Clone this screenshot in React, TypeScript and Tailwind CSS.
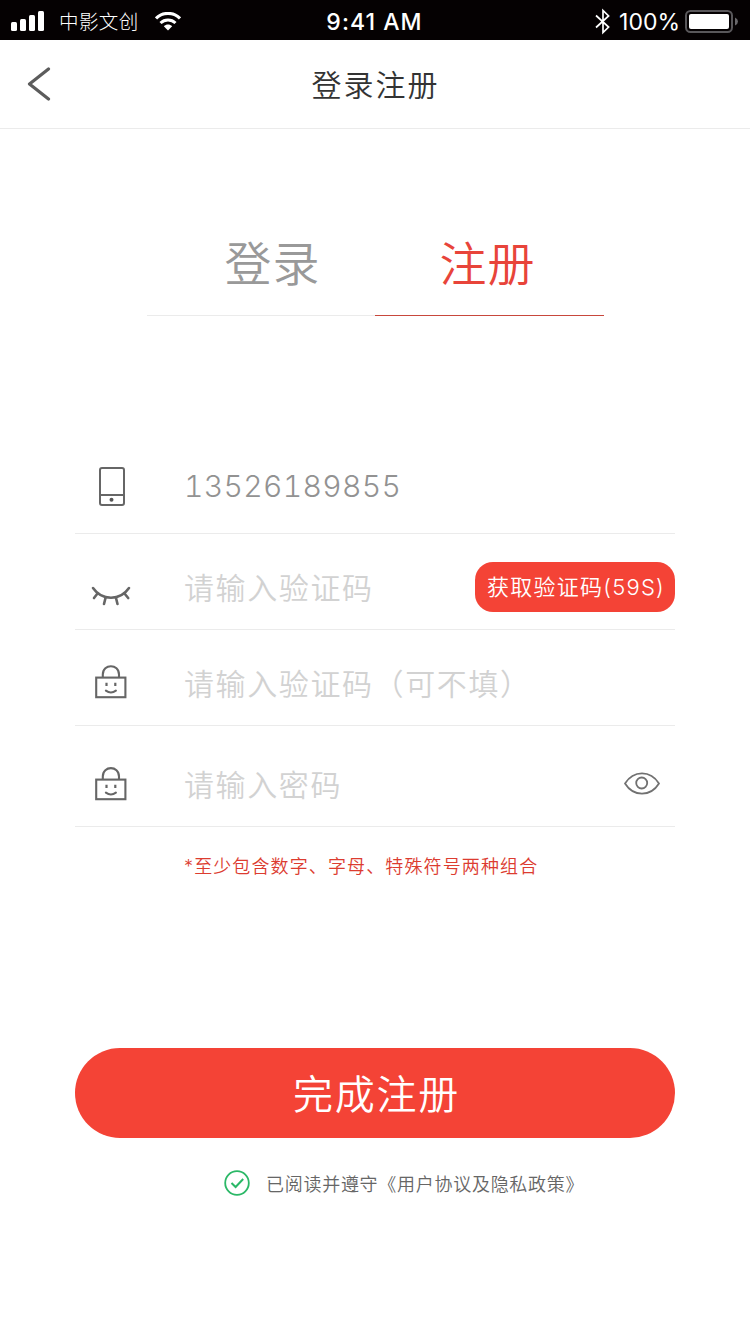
import type { ReactNode } from "react";

const SANS = "font-['Inter','Noto_Sans_CJK_SC',sans-serif]";

function StatusBar() {
  return (
    <div className="flex h-10 items-center bg-[#050102] text-white">
      <div className="flex flex-1 items-center pl-[11px]">
        <svg className="mt-[2px]" width="33" height="20" viewBox="0 0 33 20" fill="currentColor">
          <rect x="0" y="11" width="6" height="9" rx="1.5" />
          <rect x="9" y="8" width="6" height="12" rx="1.5" />
          <rect x="18" y="4" width="6" height="16" rx="1.5" />
          <rect x="27" y="0" width="6" height="20" rx="1.5" />
        </svg>
        <span className="ml-[15px] pt-[4px] text-[19.5px] leading-[40px] font-light tracking-[0.4px]">中影文创</span>
        <svg className="ml-[16px] mt-[2px]" width="26" height="19" viewBox="0 0 26 19" fill="none" stroke="currentColor">
          <path d="M1 6.4 C7.5 -.2 18.5 -.2 25 6.4" strokeWidth="3.2" />
          <path d="M5.5 11 C9.7 7 16.3 7 20.5 11" strokeWidth="3" />
          <path d="M8.8 14.3 C11.2 12 14.8 12 17.2 14.3 L13 18.5Z" fill="currentColor" stroke="none" />
        </svg>
      </div>
      <span className="pt-[3px] text-[23px] leading-[40px] font-medium tracking-[1.05px]">9:41 AM</span>
      <div className="flex flex-1 items-center justify-end pr-[12px]">
        <svg className="mt-[2px]" width="16" height="27" viewBox="0 0 16 27" fill="none" stroke="currentColor" strokeWidth="1.7">
          <path d="M2 7.5 L14.6 19 L9 24.5 V2.5 L14.6 8 L2 19.5" />
        </svg>
        <span className="ml-[9px] pt-[4px] text-[23px] leading-[37px]">100%</span>
        <svg className="ml-[5px] mt-[2px]" width="53" height="23" viewBox="0 0 53 23">
          <rect x="1" y="1" width="46" height="21" rx="4.5" fill="none" stroke="#59575a" strokeWidth="2" />
          <rect x="4" y="4" width="40" height="15" rx="2" fill="white" />
          <path d="M50 7.5 Q53 9 53 11.5 Q53 14 50 15.5Z" fill="#6a686b" />
        </svg>
      </div>
    </div>
  );
}

function PhoneIcon() {
  return (
    <svg width="26" height="39" viewBox="0 0 26 39" fill="none" stroke="#666" strokeWidth="2">
      <rect x="1" y="1" width="24" height="37" rx="2" />
      <path d="M1 28H25" />
      <circle cx="12.5" cy="32.7" r="2" fill="#555" stroke="none" />
    </svg>
  );
}

function ClosedEyeIcon() {
  return (
    <svg width="40" height="20" viewBox="0 0 40 20" fill="none" stroke="#666" strokeWidth="2.6" strokeLinecap="round">
      <path d="M2 2 C11 15 29 15 38 2" />
      <path d="M6.5 7.5 L3 12 M14.5 12 L13 18 M25 12 L26.5 18 M33.5 7.5 L37.2 12" />
    </svg>
  );
}

function LockIcon() {
  return (
    <svg width="32" height="34" viewBox="0 0 32 34" fill="none" stroke="#666" strokeWidth="2.1">
      <rect x="1.2" y="12.6" width="29.2" height="19.6" />
      <path d="M7.8 12 V9.5 C7.8 -1.6 24 -1.6 24 9.5 V12" />
      <path d="M11.5 17.8 V21 M20.3 17.8 V21" strokeWidth="2.2" />
      <path d="M10.9 25.6 Q15.9 29.4 20.9 25.6" strokeLinecap="round" />
    </svg>
  );
}

function EyeIcon() {
  return (
    <svg width="36" height="23" viewBox="0 0 36 23" fill="none" stroke="#717171" strokeWidth="1.8">
      <path d="M1 11.5 C9.5 -2 26.5 -2 35 11.5 C26.5 25 9.5 25 1 11.5Z" strokeLinejoin="round" />
      <circle cx="17.7" cy="11" r="5.5" />
    </svg>
  );
}

function Field({
  icon,
  className,
  children,
}: {
  icon: ReactNode;
  className: string;
  children: ReactNode;
}) {
  return (
    <div className={`flex items-center border-b border-[#ebebeb] ${className}`}>
      <div className="flex w-[72px] shrink-0 justify-center">{icon}</div>
      <div className="flex flex-1 items-center justify-between pl-[37px]">{children}</div>
    </div>
  );
}

function Hint({ children }: { children: ReactNode }) {
  return (
    <span className="pt-[2px] text-[30px] leading-[44px] font-[350] tracking-[1.6px] whitespace-nowrap text-[#d2d2d2]">
      {children}
    </span>
  );
}

export default function App() {
  return (
    <div className={`flex h-[1334px] w-[750px] flex-col overflow-hidden bg-white ${SANS}`}>
      <StatusBar />
      <header className="grid h-[89px] grid-cols-[1fr_auto_1fr] items-center border-b border-[#ebebeb]">
        <svg className="ml-[27px]" width="24" height="34" viewBox="0 0 24 34" fill="none" stroke="#5c5c5c" strokeWidth="3.2" strokeLinecap="round" strokeLinejoin="round">
          <path d="M21.5 2 L2.5 17 L21.5 32" />
        </svg>
        <h1 className="pt-[2px] pl-[1px] text-[30px] leading-[44px] font-[350] tracking-[2px] text-[#333]">登录注册</h1>
      </header>

      <nav className="mx-auto mt-[100px] grid h-[87px] w-[457px] grid-cols-[228px_229px] text-center text-[47px] font-[350]">
        <div className="flex flex-col justify-between">
          <span className="pt-[2px] pl-[24px] leading-[66px] tracking-[1px] text-[#999]">登录</span>
          <div className="h-px bg-[#ebebeb]" />
        </div>
        <div className="flex flex-col justify-between">
          <span className="pt-[2px] pr-[3px] leading-[66px] tracking-[1px] text-[#e8443a]">注册</span>
          <div className="h-px bg-[#c8473c]" />
        </div>
      </nav>

      <main className="mx-[75px] mt-[122px] flex flex-col">
        <Field icon={<div className="pl-[1px] pt-[1px]"><PhoneIcon /></div>} className="h-[96px]">
          <span className="pt-[1px] text-[30px] leading-[44px] font-light tracking-[0.35px] text-[#929292] tabular-nums">
            13526189855
          </span>
        </Field>
        <Field icon={<div className="pt-[18px]"><ClosedEyeIcon /></div>} className="h-[96px] pt-[10px]">
          <Hint>请输入验证码</Hint>
          <button className="h-[50px] w-[200px] rounded-[18px] bg-[#f44336] pt-[2px] pl-[2px] text-[22px] font-[350] tracking-[1.25px] whitespace-nowrap text-white">
            获取验证码(59S)
          </button>
        </Field>
        <Field icon={<div className="pb-[1px]"><LockIcon /></div>} className="h-[96px] pt-[10px]">
          <Hint>请输入验证码（可不填）</Hint>
        </Field>
        <Field icon={<LockIcon />} className="h-[101px] pt-[15px]">
          <Hint>请输入密码</Hint>
          <div className="mr-[15px]"><EyeIcon /></div>
        </Field>
        <p className="mt-[27px] pl-[109px] text-[18px] leading-[26px] font-[350] tracking-[1.12px] whitespace-nowrap text-[#dc3c30]">
          *至少包含数字、字母、特殊符号两种组合
        </p>
        <button className="mt-[168px] h-[90px] rounded-full bg-[#f44336] pt-[3px] pl-[3px] text-[40px] font-[350] tracking-[1.7px] text-white">
          完成注册
        </button>
        <div className="mt-[32px] flex h-[26px] items-center pl-[149px]">
          <svg width="26" height="26" viewBox="0 0 26 26" fill="none" stroke="#2bb867" strokeWidth="1.8">
            <circle cx="13" cy="13" r="11.8" />
            <path d="M7.5 13 L11.6 17 L19.2 9" strokeWidth="2" />
          </svg>
          <span className="ml-[16px] pt-[3px] text-[18px] leading-[24px] font-[350] tracking-[0.72px] whitespace-nowrap text-[#666]">
            已阅读并遵守《用户协议及隐私政策》
          </span>
        </div>
      </main>
    </div>
  );
}
